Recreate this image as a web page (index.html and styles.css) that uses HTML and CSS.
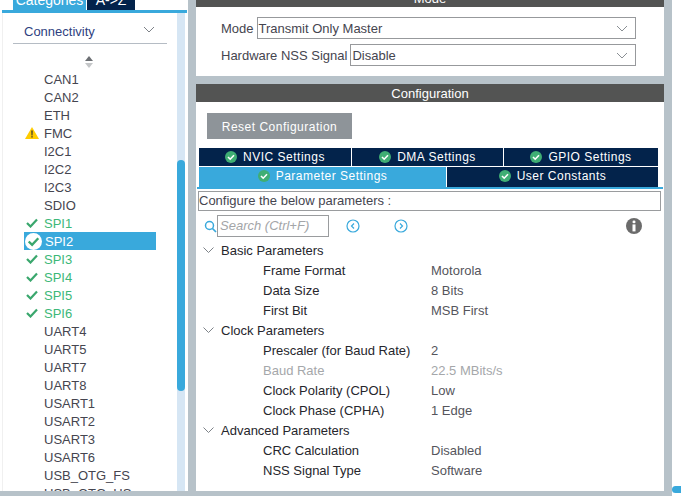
FILE: index.html
```html
<!DOCTYPE html>
<html lang="en">
<head>
    <meta charset="UTF-8">
    <title>SPI2 Configuration</title>
    <link rel="stylesheet" href="styles.css">
</head>
<body>
    <div class="app">
        <!-- Left: categories -->
        <aside class="sidebar">
            <div class="topTabs">
                <div class="topTab topTabActive">Categories</div>
                <div class="topTab">A-&gt;Z</div>
            </div>
            <div class="sideBody">
                <div class="sideContent">
                    <div class="catSelect">
                        <span>Connectivity</span>
                        <svg class="catChevron" width="12" height="7" viewBox="0 0 12 7"><path d="M1 1l5 5 5-5" fill="none" stroke="#7d8288"/></svg>
                    </div>
                    <div class="sortArrows">
                        <svg width="10" height="12" viewBox="0 0 10 12"><path d="M5 0l4 5H1z" fill="#6d7074"/><path d="M5 12l4-5H1z" fill="#c4c6c8"/></svg>
                    </div>
                    <ul class="periphList">
                        <li><span class="mark"></span>CAN1</li>
                        <li><span class="mark"></span>CAN2</li>
                        <li><span class="mark"></span>ETH</li>
                        <li><span class="mark"><svg width="14" height="12" viewBox="0 0 14 12"><path d="M7 0l7 12H0z" fill="#fc0"/><path d="M6.3 3.5h1.4l-.2 5h-1zM6.3 9.2h1.4v1.4H6.3z" fill="#333"/></svg></span>FMC</li>
                        <li><span class="mark"></span>I2C1</li>
                        <li><span class="mark"></span>I2C2</li>
                        <li><span class="mark"></span>I2C3</li>
                        <li><span class="mark"></span>SDIO</li>
                        <li class="ok"><span class="mark"><svg width="12" height="10" viewBox="0 0 12 10"><path d="M1 5l3.500 3.500L11 1.500" fill="none" stroke="#3aa76d" stroke-width="2.200"/></svg></span>SPI1</li>
                        <li class="selected"><span class="mark"><svg width="17" height="17" viewBox="0 0 16 16"><circle cx="8" cy="8" r="8" fill="#fff"/><path d="M3.500 8l3.200 3.200L12.500 5" fill="none" stroke="#3aa76d" stroke-width="2.200"/></svg></span>SPI2</li>
                        <li class="ok"><span class="mark"><svg width="12" height="10" viewBox="0 0 12 10"><path d="M1 5l3.500 3.500L11 1.500" fill="none" stroke="#3aa76d" stroke-width="2.200"/></svg></span>SPI3</li>
                        <li class="ok"><span class="mark"><svg width="12" height="10" viewBox="0 0 12 10"><path d="M1 5l3.500 3.500L11 1.500" fill="none" stroke="#3aa76d" stroke-width="2.200"/></svg></span>SPI4</li>
                        <li class="ok"><span class="mark"><svg width="12" height="10" viewBox="0 0 12 10"><path d="M1 5l3.500 3.500L11 1.500" fill="none" stroke="#3aa76d" stroke-width="2.200"/></svg></span>SPI5</li>
                        <li class="ok"><span class="mark"><svg width="12" height="10" viewBox="0 0 12 10"><path d="M1 5l3.500 3.500L11 1.500" fill="none" stroke="#3aa76d" stroke-width="2.200"/></svg></span>SPI6</li>
                        <li><span class="mark"></span>UART4</li>
                        <li><span class="mark"></span>UART5</li>
                        <li><span class="mark"></span>UART7</li>
                        <li><span class="mark"></span>UART8</li>
                        <li><span class="mark"></span>USART1</li>
                        <li><span class="mark"></span>USART2</li>
                        <li><span class="mark"></span>USART3</li>
                        <li><span class="mark"></span>USART6</li>
                        <li><span class="mark"></span>USB_OTG_FS</li>
                        <li><span class="mark"></span>USB_OTG_HS</li>
                    </ul>
                </div>
                <div class="sideScroll"><div class="sideThumb"></div></div>
            </div>
        </aside>

        <!-- Right: mode and configuration -->
        <main class="main">
            <section class="modePanel">
                <div class="panelHead modeHead"><span>Mode</span></div>
                <div class="modeBody">
                    <div class="modeRow">
                        <label>Mode</label>
                        <div class="combo"><span>Transmit Only Master</span><svg width="12" height="7" viewBox="0 0 12 7"><path d="M1 1l5 5 5-5" fill="none" stroke="#8a8f94"/></svg></div>
                    </div>
                    <div class="modeRow">
                        <label>Hardware NSS Signal</label>
                        <div class="combo"><span>Disable</span><svg width="12" height="7" viewBox="0 0 12 7"><path d="M1 1l5 5 5-5" fill="none" stroke="#8a8f94"/></svg></div>
                    </div>
                </div>
            </section>

            <section class="configPanel">
                <div class="panelHead">Configuration</div>
                <div class="configBody">
                    <button type="button" class="resetBtn">Reset Configuration</button>
                    <div class="tabRow tabRow3">
                        <div class="tab"><svg class="tabCheck" width="12" height="12" viewBox="0 0 12 12"><circle cx="6" cy="6" r="6" fill="#3fae74"/><path d="M3 6l2.200 2.200L9 4.200" fill="none" stroke="#fff" stroke-width="1.600"/></svg>NVIC Settings</div>
                        <div class="tab"><svg class="tabCheck" width="12" height="12" viewBox="0 0 12 12"><circle cx="6" cy="6" r="6" fill="#3fae74"/><path d="M3 6l2.200 2.200L9 4.200" fill="none" stroke="#fff" stroke-width="1.600"/></svg>DMA Settings</div>
                        <div class="tab"><svg class="tabCheck" width="12" height="12" viewBox="0 0 12 12"><circle cx="6" cy="6" r="6" fill="#3fae74"/><path d="M3 6l2.200 2.200L9 4.200" fill="none" stroke="#fff" stroke-width="1.600"/></svg>GPIO Settings</div>
                    </div>
                    <div class="tabRow tabRow2">
                        <div class="tab tabActive"><svg class="tabCheck" width="12" height="12" viewBox="0 0 12 12"><circle cx="6" cy="6" r="6" fill="#3fae74"/><path d="M3 6l2.200 2.200L9 4.200" fill="none" stroke="#fff" stroke-width="1.600"/></svg>Parameter Settings</div>
                        <div class="tab"><svg class="tabCheck" width="12" height="12" viewBox="0 0 12 12"><circle cx="6" cy="6" r="6" fill="#3fae74"/><path d="M3 6l2.200 2.200L9 4.200" fill="none" stroke="#fff" stroke-width="1.600"/></svg>User Constants</div>
                    </div>
                    <div class="tabLine"></div>
                    <div class="hintBox">Configure the below parameters :</div>
                    <div class="searchRow">
                        <svg class="searchIcon" width="13" height="13" viewBox="0 0 13 13"><circle cx="5.500" cy="5.500" r="4" fill="none" stroke="#39a9dc" stroke-width="1.500"/><path d="M8.500 8.500l3.500 3.500" stroke="#39a9dc" stroke-width="1.700"/></svg>
                        <div class="searchBox">Search (Ctrl+F)</div>
                        <svg class="navBack" width="14" height="14" viewBox="0 0 14 14"><circle cx="7" cy="7" r="6" fill="none" stroke="#39a9dc" stroke-width="1.200"/><path d="M8 4.500L5.500 7 8 9.500" fill="none" stroke="#39a9dc" stroke-width="1.200"/></svg>
                        <svg class="navNext" width="14" height="14" viewBox="0 0 14 14"><circle cx="7" cy="7" r="6" fill="none" stroke="#39a9dc" stroke-width="1.200"/><path d="M6 4.500L8.500 7 6 9.500" fill="none" stroke="#39a9dc" stroke-width="1.200"/></svg>
                        <svg class="infoIcon" width="16" height="16" viewBox="0 0 16 16"><circle cx="8" cy="8" r="8" fill="#6b6b6b"/><rect x="6.500" y="2.600" width="3" height="2.600" rx="1.300" fill="#fff"/><rect x="6.500" y="6.400" width="3" height="7" fill="#fff"/></svg>
                    </div>
                    <div class="paramTree">
                        <div class="groupRow"><svg width="11" height="6" viewBox="0 0 11 6"><path d="M.5.500l5 5 5-5" fill="none" stroke="#7d8288"/></svg>Basic Parameters</div>
                        <div class="paramRow"><span>Frame Format</span><span class="paramVal">Motorola</span></div>
                        <div class="paramRow"><span>Data Size</span><span class="paramVal">8 Bits</span></div>
                        <div class="paramRow"><span>First Bit</span><span class="paramVal">MSB First</span></div>
                        <div class="groupRow"><svg width="11" height="6" viewBox="0 0 11 6"><path d="M.5.500l5 5 5-5" fill="none" stroke="#7d8288"/></svg>Clock Parameters</div>
                        <div class="paramRow"><span>Prescaler (for Baud Rate)</span><span class="paramVal">2</span></div>
                        <div class="paramRow paramOff"><span>Baud Rate</span><span class="paramVal">22.5 MBits/s</span></div>
                        <div class="paramRow"><span>Clock Polarity (CPOL)</span><span class="paramVal">Low</span></div>
                        <div class="paramRow"><span>Clock Phase (CPHA)</span><span class="paramVal">1 Edge</span></div>
                        <div class="groupRow"><svg width="11" height="6" viewBox="0 0 11 6"><path d="M.5.500l5 5 5-5" fill="none" stroke="#7d8288"/></svg>Advanced Parameters</div>
                        <div class="paramRow"><span>CRC Calculation</span><span class="paramVal">Disabled</span></div>
                        <div class="paramRow"><span>NSS Signal Type</span><span class="paramVal">Software</span></div>
                    </div>
                </div>
            </section>
        </main>

        <div class="rightEdge"><div class="edgeThumb"></div></div>
    </div>
</body>
</html>
```

FILE: styles.css
```css
* {
    box-sizing: border-box;
}
html, body {
    margin: 0;
    height: 503px;
    overflow: hidden;
    background-color: #fff;
}
body {
    font-family: "Liberation Sans", Arial, sans-serif;
    font-size: 13px;
    color: #45454f;
}
.app {
    display: flex;
    height: 496px;
    background-color: #b7c2c9;
}

/* sidebar */
.sidebar {
    width: 188px;
    height: 491px;
    margin-right: 8px;
    background-color: #fff;
    display: flex;
    flex-direction: column;
}
.topTabs {
    display: flex;
    gap: 1px;
    height: 10px;
    padding-left: 13px;
    overflow: hidden;
}
.topTab {
    width: 48px;
    height: 10px;
    line-height: 0;
    text-align: center;
    color: #fff;
    background-color: #03234b;
    font-size: 14px;
    overflow: hidden;
}
.topTabActive {
    width: 73px;
    background-color: #39a9dc;
}
.sideBody {
    flex: 1;
    min-height: 0;
    display: flex;
    margin-left: 2px;
    border-top: 3px solid #39a9dc;
    margin-right: 1px;
}
.sideContent {
    width: 175px;
    border-left: 1px solid #f0f0f0;
    overflow: hidden;
}
.catSelect {
    display: flex;
    align-items: center;
    justify-content: space-between;
    width: 154px;
    height: 31px;
    margin: 0 0 0 10px;
    padding: 10px 12px 4px 11px;
    border-bottom: 1px solid #b5bcc4;
    color: #2f3f7f;
    font-size: 13px;
}
.catChevron {
    margin-top: -4px;
}
.sortArrows {
    height: 26px;
    padding: 12px 0 0 81px;
    line-height: 0;
}
.periphList {
    list-style: none;
    margin: 0;
    padding: 0 0 0 21px;
}
.periphList li {
    display: flex;
    align-items: center;
    width: 132px;
    height: 18px;
}
.mark {
    width: 20px;
    flex: none;
    display: flex;
    justify-content: center;
    align-items: center;
    padding-right: 4px;
}
.ok {
    color: #3cb878;
}
.periphList .selected {
    background-color: #39a9dc;
    color: #fff;
}
.selected .mark {
    padding-right: 1px;
    margin-right: 1px;
}
.sideScroll {
    width: 8px;
    background-color: #d6e6f4;
}
.sideThumb {
    width: 8px;
    height: 231px;
    margin-top: 147px;
    border-radius: 4px;
    background-color: #39a9dc;
}

/* main */
.main {
    width: 468px;
    display: flex;
    flex-direction: column;
    gap: 8px;
}
.panelHead {
    height: 18px;
    line-height: 20px;
    text-align: center;
    color: #fff;
    background-color: #535453;
}
.modeHead {
    height: 7px;
    line-height: 7px;
    overflow: hidden;
}
.modeHead span {
    display: block;
    margin-top: -5px;
}
.modePanel {
    height: 76px;
    background-color: #fff;
}
.modeBody {
    padding: 10px 28px 0 25px;
}
.modeRow {
    display: flex;
    align-items: center;
    gap: 3px;
    margin-bottom: 5px;
}
.combo {
    flex: 1;
    height: 22px;
    display: flex;
    align-items: center;
    justify-content: space-between;
    padding: 0 7px 0 1px;
    border: 1px solid #97999c;
}
.configPanel {
    height: 407px;
    background-color: #fff;
}
.configBody {
    padding: 11px 3px 0 3px;
}
.resetBtn {
    display: block;
    width: 145px;
    height: 26px;
    margin: 0 0 9px 8px;
    border: 0;
    padding: 2px 0 0 0;
    color: #fff;
    background-color: #8e9499;
    font-family: inherit;
    font-size: 12px;
    letter-spacing: .5px;
}
.tabRow {
    display: grid;
    gap: 1px;
    margin-bottom: 1px;
}
.tabRow3 {
    grid-template-columns: 152px 151px 154px;
    height: 18px;
}
.tabRow2 {
    grid-template-columns: 247px 211px;
    height: 20px;
    margin-bottom: 0;
}
.tab {
    display: flex;
    align-items: center;
    justify-content: center;
    gap: 6px;
    color: #fff;
    background-color: #03234b;
    font-size: 12px;
    letter-spacing: .5px;
}
.tabRow2 .tab {
    padding-bottom: 2px;
}
.tabActive {
    background-color: #39a9dc;
}
.tabLine {
    height: 2px;
    width: 466px;
    margin-left: -2px;
    background-color: #39a9dc;
}
.hintBox {
    height: 20px;
    line-height: 18px;
    width: 463px;
    margin: 2px 0 0 -1px;
    border: 1px solid #9a9c9e;
}
.searchRow {
    display: flex;
    align-items: center;
    height: 22px;
    margin-top: 4px;
    padding-left: 5px;
}
.searchBox {
    width: 112px;
    height: 22px;
    line-height: 20px;
    padding-left: 2px;
    border: 1px solid #9a9c9e;
    color: #a3a5a8;
    font-style: italic;
}
.navBack {
    margin-left: 17px;
}
.navNext {
    margin-left: 34px;
}
.infoIcon {
    margin-left: 218px;
}
.paramTree {
    margin-top: 3px;
}
.groupRow {
    display: flex;
    align-items: center;
    gap: 7px;
    height: 20px;
    padding-left: 4px;
    color: #26262c;
}
.paramRow {
    display: flex;
    align-items: center;
    height: 20px;
    padding-left: 64px;
    color: #26262c;
}
.paramRow span:first-child {
    width: 168px;
}
.paramVal {
    color: #55555c;
}
.paramOff span,
.paramOff .paramVal {
    color: #a5a7aa;
}

/* right edge */
.rightEdge {
    width: 9px;
    margin-left: 8px;
    background-color: #fff;
    height: 496px;
}
.edgeThumb {
    height: 7px;
    margin-top: 486px;
    border-radius: 4px 0 0 4px;
    background-color: #39a9dc;
}
```
